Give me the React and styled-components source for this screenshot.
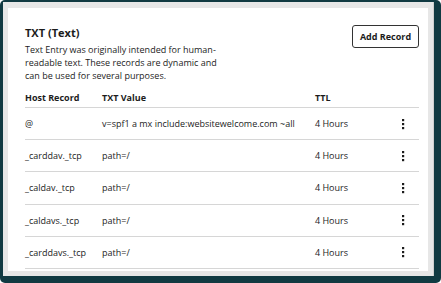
import React from "react";
import styled, { createGlobalStyle } from "styled-components";

const GlobalStyle = createGlobalStyle`
  html, body { margin: 0; padding: 0; background: #ffffff; }
  body { font-family: "Open Sans", "Liberation Sans", sans-serif; color: #1c1c1c; }
  * { box-sizing: border-box; }
`;

const Frame = styled.div`
  width: 441px;
  height: 283px;
  background: #113a42;
  border-radius: 5px;
  padding: 2px 7px 7px 3px;
`;

const Panel = styled.div`
  height: 100%;
  background: #e7e7e7;
  border-right: 1px solid #cfcfcf;
  padding: 6px 5px 5px 5px;
`;

const Card = styled.div`
  height: 100%;
  background: #ffffff;
  padding: 16px 9px 0 17px;
`;

const Header = styled.div`
  display: flex;
  justify-content: space-between;
  align-items: flex-start;
`;

const Intro = styled.div`
  width: 194px;
`;

const Title = styled.h2`
  margin: 0;
  font-size: 11px;
  line-height: 18px;
  font-weight: 700;
`;

const Desc = styled.p`
  margin: 1px 0 0;
  font-size: 9px;
  line-height: 13px;
`;

const AddButton = styled.button`
  margin-top: 1px;
  width: 67px;
  height: 23px;
  padding: 0;
  background: #fff;
  border: 1px solid #333;
  border-radius: 3px;
  font-family: inherit;
  font-size: 9px;
  font-weight: 700;
  color: #1c1c1c;
`;

const Row = styled.div`
  display: grid;
  grid-template-columns: 77px 213px 72px 1fr;
  align-items: center;
  font-size: 9px;
  border-bottom: 1px solid #d6d6d6;
  height: ${(p) => (p.$head ? "26px" : "32.2px")};
  padding-top: ${(p) => (p.$head ? "5px" : "0")};
  font-weight: ${(p) => (p.$head ? 700 : 400)};
`;

const Cell = styled.span`
  white-space: nowrap;
`;

const MenuCell = styled.span`
  display: flex;
  justify-content: center;
`;

const Kebab = () => (
  <svg width="4" height="12" viewBox="0 0 4 12">
    <rect x="1" y="1" width="2.2" height="2.2" fill="#1c1c1c" />
    <rect x="1" y="5" width="2.2" height="2.2" fill="#1c1c1c" />
    <rect x="1" y="9" width="2.2" height="2.2" fill="#1c1c1c" />
  </svg>
);

const records = [
  ["@", "v=spf1 a mx include:websitewelcome.com ~all"],
  ["_carddav._tcp", "path=/"],
  ["_caldav._tcp", "path=/"],
  ["_caldavs._tcp", "path=/"],
  ["_carddavs._tcp", "path=/"],
];

export default function App() {
  return (
    <>
      <GlobalStyle />
      <Frame>
        <Panel>
          <Card>
            <Header>
              <Intro>
                <Title>TXT (Text)</Title>
                <Desc>
                  Text Entry was originally intended for human-readable text. These records are dynamic and can be used for several purposes.
                </Desc>
              </Intro>
              <AddButton>Add Record</AddButton>
            </Header>
            <Row $head>
              <Cell>Host Record</Cell>
              <Cell>TXT Value</Cell>
              <Cell>TTL</Cell>
              <Cell />
            </Row>
            {records.map(([host, value]) => (
              <Row key={host}>
                <Cell>{host}</Cell>
                <Cell>{value}</Cell>
                <Cell>4 Hours</Cell>
                <MenuCell>
                  <Kebab />
                </MenuCell>
              </Row>
            ))}
          </Card>
        </Panel>
      </Frame>
    </>
  );
}
